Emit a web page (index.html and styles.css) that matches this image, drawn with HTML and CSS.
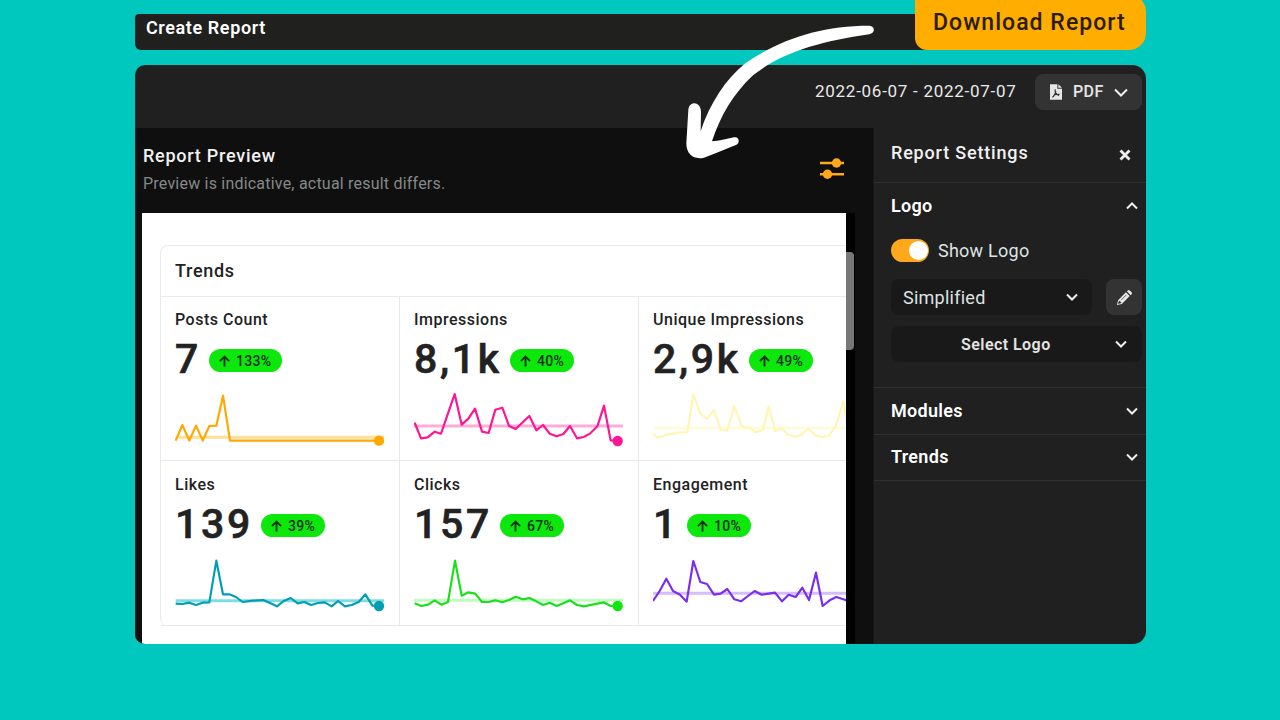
FILE: index.html
```html
<!DOCTYPE html>
<html lang="en">
<head>
<meta charset="utf-8">
<title>Create Report</title>
<link rel="stylesheet" href="styles.css">
</head>
<body>
<main class="stage">
  <header class="titlebar"><h1 class="titlebar-text">Create Report</h1></header>
  <button class="download"><span class="download-text">Download Report</span></button>

  <section class="window">
    <div class="toolbar">
      <span class="range">2022-06-07 - 2022-07-07</span>
      <button class="format">
        <svg class="file-icon" viewBox="0 0 13 17"><path d="M0 0H8V5H13V17H0Z M9 0L13 4H9Z" fill="#e6e6e6"/><path d="M5.6 5.5C5.2 9 6 11 9.8 12.2M6.2 7.5C6 10.5 4.5 13 2.6 14.2M3.5 12.5C6 11 8 10.8 10.5 11" fill="none" stroke="#333" stroke-width="1.2"/></svg>
        <span class="format-text">PDF</span>
        <svg class="chev-lg" viewBox="0 0 14 9"><path d="M1 1.500L7 7.500L13 1.500"/></svg>
      </button>
    </div>
    <div class="content">
      <div class="preview">
        <div class="preview-head">
          <div class="preview-titles">
            <h2 class="preview-title">Report Preview</h2>
            <p class="preview-note">Preview is indicative, actual result differs.</p>
          </div>
          <svg class="sliders" viewBox="0 0 24 22"><path d="M0 5H24M0 16.300H24" stroke="#ffa81c" stroke-width="2.400"/><circle cx="16.500" cy="5" r="4.700" fill="#ffa81c"/><circle cx="7.500" cy="16.300" r="4.700" fill="#ffa81c"/></svg>
        </div>
        <div class="page-row">
          <div class="page">
            <div class="card">
              <h3 class="card-title">Trends</h3>
              <div class="grid">
                <article class="cell">
                  <h4 class="label">Posts Count</h4>
                  <div class="stat"><span class="num">7</span><span class="pill pill-wide"><svg class="up" viewBox="0 0 12 12"><path d="M6 12V1.500M1 6.200L6 1.200L11 6.200"/></svg><span>133%</span></span></div>
                  <svg class="chart" viewBox="105 480 636 180"><path class="avg" stroke="#ffdf9c" d="M107 622H732"/><path class="line" stroke="#ffa800" d="M107 632L127 585L148 632L168 587L188 632L208 588L229 587L249 497L270 632H716"/><circle cx="717" cy="632" r="15.500" fill="#ffa800"/></svg>
                </article>
                <article class="cell">
                  <h4 class="label">Impressions</h4>
                  <div class="stat"><span class="num">8,1k</span><span class="pill"><svg class="up" viewBox="0 0 12 12"><path d="M6 12V1.500M1 6.200L6 1.200L11 6.200"/></svg><span>40%</span></span></div>
                  <svg class="chart" viewBox="57 300 636 180"><path class="avg" stroke="#ffadd6" d="M57 408H684"/><path class="line" stroke="#ff1493" d="M59 398L78 445L98 442L119 425L138 431L159 370L179 312L200 404L220 386L240 356L261 425L281 429L301 359L322 353L342 408L362 417L383 397L403 378L424 421L444 405L464 431L485 439L505 432L525 408L546 445L566 441L586 430L607 409L627 347L647 451L668 453"/><circle cx="668" cy="453" r="15.500" fill="#ff1493"/></svg>
                </article>
                <article class="cell">
                  <h4 class="label">Unique Impressions</h4>
                  <div class="stat"><span class="num">2,9k</span><span class="pill"><svg class="up" viewBox="0 0 12 12"><path d="M6 12V1.500M1 6.200L6 1.200L11 6.200"/></svg><span>49%</span></span></div>
                  <svg class="chart" viewBox="54 300 636 180"><path class="avg" stroke="#fffbdc" d="M54 414H680"/><path class="line" stroke="#fff6b4" d="M54 430L68 443L94 434L134 427L157 426L175 312L196 371L216 386L237 360L257 420L277 421L298 348L320 408L345 414L362 427L383 421L401 350L421 424L440 415L459 434L480 440L500 434L520 416L541 436L562 441L582 437L602 408L625 335L645 450L665 452"/></svg>
                </article>
                <article class="cell">
                  <h4 class="label">Likes</h4>
                  <div class="stat"><span class="num">139</span><span class="pill"><svg class="up" viewBox="0 0 12 12"><path d="M6 12V1.500M1 6.200L6 1.200L11 6.200"/></svg><span>39%</span></span></div>
                  <svg class="chart" viewBox="105 300 636 180"><path class="avg" stroke="#7ddde2" d="M107 437H732"/><path class="line" stroke="#009eb3" d="M107 446L127 447L148 443L168 450L188 443L208 442L229 317L249 418L268 418L288 426L308 441L339 437L370 435L390 444L411 454L431 438L452 429L473 445L493 441L513 450L534 444L554 442L575 454L594 438L615 454L635 450L656 441L676 418L697 452L716 453"/><circle cx="717" cy="453" r="15.500" fill="#009eb3"/></svg>
                </article>
                <article class="cell">
                  <h4 class="label">Clicks</h4>
                  <div class="stat"><span class="num">157</span><span class="pill"><svg class="up" viewBox="0 0 12 12"><path d="M6 12V1.500M1 6.200L6 1.200L11 6.200"/></svg><span>67%</span></span></div>
                  <svg class="chart" viewBox="57 300 636 180"><path class="avg" stroke="#c2fbc2" d="M57 436H684"/><path class="line" stroke="#1ae01a" d="M59 445L79 453L99 449L119 436L139 449L159 441L180 317L200 422L220 412L241 416L261 441H280L301 436L321 442L342 435L362 425L383 433L403 429L424 439L444 450L464 443L485 453L505 445L525 436L546 450L566 454L596 448L626 442L647 453H668"/><circle cx="668" cy="453" r="15.500" fill="#0ce80c"/></svg>
                </article>
                <article class="cell">
                  <h4 class="label">Engagement</h4>
                  <div class="stat"><span class="num">1</span><span class="pill"><svg class="up" viewBox="0 0 12 12"><path d="M6 12V1.500M1 6.200L6 1.200L11 6.200"/></svg><span>10%</span></span></div>
                  <svg class="chart" viewBox="54 300 636 180"><path class="avg" stroke="#d5bdfa" d="M54 415H680"/><path class="line" stroke="#7a2cf0" d="M54 438L74 408L94 371L114 408L135 419L155 440L175 318L196 381L216 387L237 419L257 416L277 402L298 433L318 439L339 423L359 408L380 419L420 413L441 439L461 419L482 426L502 398L522 435L543 353L563 453L584 436L604 426L625 433L645 440"/></svg>
                </article>
              </div>
            </div>
          </div>
          <div class="track"><div class="thumb"></div></div>
        </div>
      </div>

      <aside class="settings">
        <div class="set-head">
          <h2 class="set-title">Report Settings</h2>
          <svg class="close" viewBox="0 0 12 12"><path d="M1.500 1.500L10.500 10.500M10.500 1.500L1.500 10.500"/></svg>
        </div>
        <div class="logo-group">
          <div class="group-head"><h3 class="group-title">Logo</h3><svg class="chev" viewBox="0 0 12 8"><path d="M1 6.500L6 1.500L11 6.500"/></svg></div>
          <label class="switch-row"><span class="switch"><span class="knob"></span></span><span class="switch-text">Show Logo</span></label>
          <div class="select-row">
            <div class="select"><span class="select-text">Simplified</span><svg class="chev" viewBox="0 0 12 8"><path d="M1 1.500L6 6.500L11 1.500"/></svg></div>
            <button class="edit"><svg class="pencil" viewBox="0 0 18 18"><path d="M1 17L2.200 11.800L10.500 3.500L14.500 7.500L6.200 15.800ZM11.500 2.500L12.500 1.500Q13.500 .500 14.500 1.500L16.500 3.500Q17.500 4.500 16.500 5.500L15.500 6.500Z" fill="#e8e8e8"/><path d="M2.600 15.300L3.500 12.600L5.400 14.500ZM5.500 11.700L11 6.200" fill="#333" stroke="#333" stroke-width=".8"/></svg></button>
          </div>
          <button class="pick"><span class="pick-text">Select Logo</span><svg class="chev" viewBox="0 0 12 8"><path d="M1 1.500L6 6.500L11 1.500"/></svg></button>
        </div>
        <div class="group"><h3 class="group-title">Modules</h3><svg class="chev" viewBox="0 0 12 8"><path d="M1 1.500L6 6.500L11 1.500"/></svg></div>
        <div class="group"><h3 class="group-title">Trends</h3><svg class="chev" viewBox="0 0 12 8"><path d="M1 1.500L6 6.500L11 1.500"/></svg></div>
      </aside>
    </div>
  </section>

  <svg class="arrow" viewBox="42 60 600 450"><path fill="#fff" d="M598 77C450 77 330 118 226 190C168 236 120 310 92 393L93 335C92 303 57 302 55 330L49 430C49 464 72 480 102 473C136 461 168 446 198 435C211 429 208 409 192 412C170 416 146 423 126 424C150 350 190 280 250 225C340 155 450 125 598 103C617 98 615 78 598 77Z"/></svg>
</main>
</body>
</html>
```
FILE: styles.css
```css
* { box-sizing: border-box; }
body { margin: 0; background: #00c8be; font-family: Roboto, "Liberation Sans", sans-serif; font-weight: 500; }
h1, h2, h3, h4, p { margin: 0; font-weight: 500; }
button { border: 0; padding: 0; font: inherit; color: inherit; }
svg { display: block; flex: none; }
span, h1, h2, h3, h4, p { white-space: nowrap; }

.stage { position: relative; width: 1280px; height: 720px; padding: 14px 134px 0 135px; overflow: hidden; }
.titlebar { height: 36px; margin-right: 200px; padding: 4px 11px; border-radius: 4px 0 0 6px; background: #20201f; color: #fff; }
.titlebar-text { font-size: 18px; line-height: 20px; letter-spacing: .6px; font-weight: 600; }
.download { position: absolute; left: 915px; top: -6px; width: 231px; height: 56px; padding: 0 18px; border-radius: 0 18px 17px 12px; background: #ffae00; color: #2b1c00; text-align: left; }
.download-text { font-size: 23px; letter-spacing: 1.050px; }
.arrow { position: absolute; left: 684px; top: 20px; width: 200px; height: 150px; }

.window { height: 579px; margin-top: 15px; border-radius: 10px 14px 13px 10px; overflow: hidden; background: #202020; color: #f2f2f2; }
.toolbar { display: flex; justify-content: flex-end; height: 63px; padding: 9px 4px 0 0; }
.range { width: 220px; font-size: 17px; line-height: 35px; font-weight: 400; letter-spacing: .730px; color: #eaeaea; }
.format { display: flex; align-items: center; width: 107px; height: 36px; padding-left: 15px; border-radius: 8px; background: #333; color: #e6e6e6; }
.file-icon { width: 12px; height: 16px; }
.format-text { width: 41px; margin-left: 11px; font-size: 16px; line-height: 20px; letter-spacing: .4px; text-align: left; padding-bottom: 1px; }
.chev-lg { width: 14px; height: 9px; }
.chev-lg path, .chev path { fill: none; stroke: #eee; stroke-width: 2; }
.chev { width: 12px; height: 8px; }

.content { display: flex; height: 516px; }
.preview { width: 738px; padding-left: 7px; background: #0f0f0f; }
.preview-head { display: flex; justify-content: space-between; height: 85px; padding: 18px 29px 0 1px; }
.preview-title { font-size: 18px; line-height: 20px; letter-spacing: .750px; }
.preview-note { margin-top: 8px; font-size: 16px; line-height: 20px; font-weight: 400; letter-spacing: .210px; color: #858989; }
.sliders { width: 24px; height: 22px; margin-top: 12px; }
.page-row { display: flex; height: 431px; }
.page { width: 704px; padding: 32px 0 0 18px; overflow: hidden; background: #fff; color: #222; }
.track { width: 9px; padding-top: 39px; background: #000; }
.thumb { width: 8px; height: 98px; border-radius: 0 4px 4px 0; background: #777; }

.card { width: 719px; border: 1px solid #e8eaed; border-bottom: 0; border-radius: 8px; }
.card-title { height: 50px; padding-left: 14px; font-size: 18px; line-height: 50px; letter-spacing: .7px; }
.grid { display: grid; grid-template-columns: 239px 239px 239px; grid-template-rows: 164px 165px; border-top: 1px solid #e8eaed; }
.cell { padding: 13px 0 0 14px; border-right: 1px solid #e6e8ec; border-bottom: 1px solid #e6e8ec; }
.label { font-size: 16px; line-height: 20px; letter-spacing: .5px; }
.cell:nth-child(n+4) .label { padding-top: 1px; height: 21px; }
.stat { display: flex; align-items: center; height: 48px; margin-top: 5px; }
.num { font-size: 41px; line-height: 48px; letter-spacing: 2.700px; color: #222; -webkit-text-stroke: .6px #222; }
.pill { display: flex; align-items: center; gap: 6px; width: 64px; height: 23px; margin: 3px 0 0 8px; padding-left: 10px; border-radius: 12px; background: #0ce80c; color: #15301a; font-size: 14px; letter-spacing: .3px; }
.pill-wide { width: 73px; }
.up { width: 11px; height: 12px; }
.up path { fill: none; stroke: #123312; stroke-width: 2; }
.chart { width: 212px; height: 60px; margin-top: 7px; }
.line { fill: none; stroke-width: 6.500; stroke-linejoin: round; }
.avg { fill: none; stroke-width: 9; }

.settings { flex: 1; border-left: 1px solid #191919; }
.set-head { display: flex; justify-content: space-between; align-items: center; height: 55px; padding: 0 15px 6px 17px; border-bottom: 1px solid #303030; }
.set-title { font-size: 18px; letter-spacing: .820px; }
.close { width: 12px; height: 12px; margin-top: 6px; }
.close path { stroke: #eee; stroke-width: 2.800; }
.logo-group { height: 205px; padding: 12px 4px 0 17px; border-bottom: 1px solid #303030; }
.group-head { display: flex; justify-content: space-between; align-items: center; height: 22px; padding-right: 4px; }
.group-title { font-size: 18px; line-height: 22px; letter-spacing: .3px; font-weight: 600; color: #fff; }
.switch-row { display: flex; align-items: center; height: 24px; margin-top: 21px; }
.switch { width: 38px; height: 23px; padding: 2px; border-radius: 12px; background: #ffa81c; }
.knob { display: block; width: 19px; height: 19px; margin-left: 16px; border-radius: 50%; background: #fff; }
.switch-text, .select-text { font-size: 18px; font-weight: 400; letter-spacing: .250px; color: #dfe3e3; }
.switch-text { margin-left: 9px; }
.select-row { display: flex; justify-content: space-between; margin-top: 17px; }
.select { display: flex; align-items: center; justify-content: space-between; width: 201px; height: 36px; padding: 0 14px 0 12px; border-radius: 8px; background: #191919; }
.edit { display: flex; align-items: center; justify-content: center; width: 36px; height: 36px; border-radius: 8px; background: #333; }
.pencil { width: 17px; height: 17px; }
.pick { display: flex; align-items: center; justify-content: space-between; width: 251px; height: 36px; margin-top: 11px; padding: 0 15px 0 70px; border-radius: 8px; background: #191919; color: #e4e4e4; }
.pick-text { font-size: 16px; letter-spacing: .450px; font-weight: 600; }
.group { display: flex; justify-content: space-between; align-items: center; height: 46.500px; padding: 0 8px 0 17px; border-bottom: 1px solid #303030; }
```
